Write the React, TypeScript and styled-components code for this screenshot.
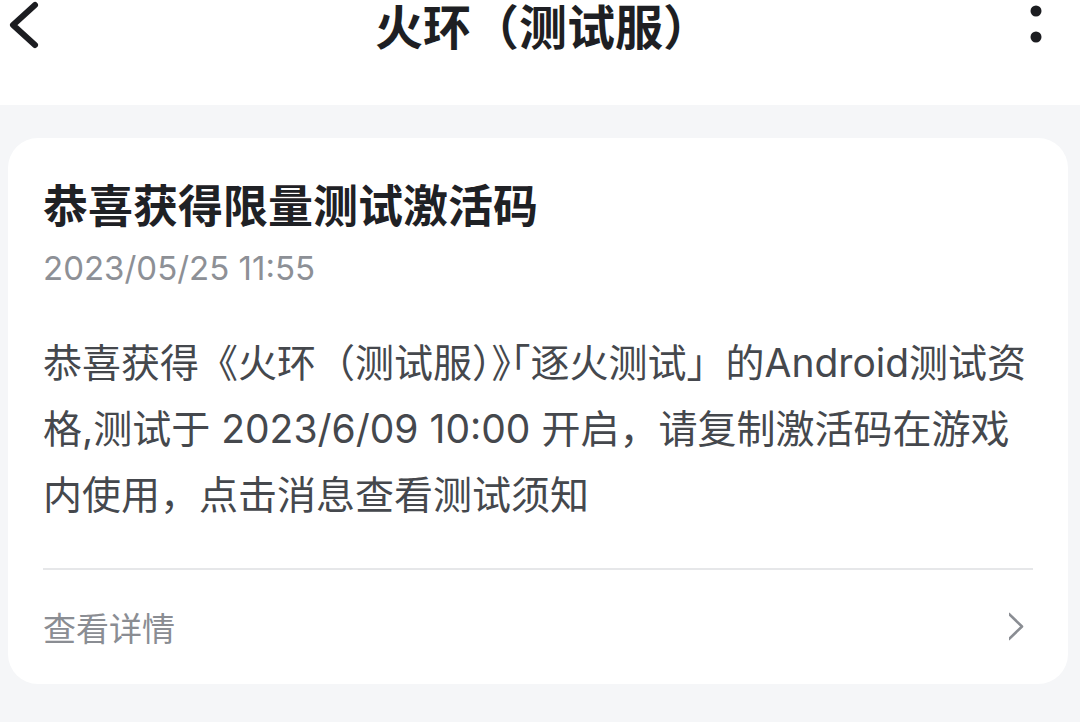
import React from "react";
import styled, { createGlobalStyle } from "styled-components";

const GlobalStyle = createGlobalStyle`
  html, body {
    margin: 0;
    padding: 0;
    background: #f5f6f8;
  }
  body {
    font-family: Inter, "Noto Sans CJK SC", sans-serif;
  }
`;

const Page = styled.div`
  width: 1080px;
  min-height: 722px;
  background: #f5f6f8;
  display: flex;
  flex-direction: column;
`;

const Header = styled.header`
  height: 105px;
  background: #ffffff;
  display: grid;
  grid-template-columns: 120px 1fr 120px;
  align-items: start;
  box-sizing: border-box;
`;

const IconButton = styled.button<{ $align: "start" | "end" }>`
  border: 0;
  background: transparent;
  padding: 0;
  height: 56px;
  display: flex;
  align-items: center;
  justify-content: ${(p) => (p.$align === "start" ? "flex-start" : "flex-end")};
  ${(p) => (p.$align === "start" ? "padding-left: 8px;" : "padding-right: 37px;")}
  cursor: pointer;
`;

const HeaderTitle = styled.h1`
  margin: 0;
  line-height: 48px;
  text-align: center;
  font-family: "Noto Sans CJK SC", sans-serif;
  font-size: 48px;
  font-weight: 700;
  color: #1e1f23;
  padding-left: 6px;
  white-space: nowrap;
`;

const Content = styled.main`
  padding: 33px 12px 38px 8px;
`;

const Card = styled.section`
  background: #ffffff;
  border-radius: 30px;
  padding: 0 35px;
`;

const CardTitle = styled.h2`
  margin: 0;
  padding-top: 36px;
  font-family: "Noto Sans CJK SC", sans-serif;
  font-size: 45px;
  line-height: 60px;
  font-weight: 700;
  color: #1f2125;
`;

const DateText = styled.div`
  margin-top: 12px;
  font-family: Inter, "Noto Sans CJK SC", sans-serif;
  font-size: 33px;
  line-height: 44px;
  color: #8d9096;
`;

const Body = styled.p`
  margin: 37px 0 0;
  font-family: Inter, "Noto Sans CJK SC", sans-serif;
  font-size: 39px;
  line-height: 66px;
  color: #45484d;
`;

const Punct = styled.span`
  font-family: "Noto Sans CJK SC", sans-serif;
  font-feature-settings: "halt" 1;
`;

const Divider = styled.hr`
  margin: 40px 0 0;
  border: 0;
  height: 2px;
  background: #e6e7e9;
`;

const FooterRow = styled.div`
  height: 114px;
  display: flex;
  align-items: center;
  justify-content: space-between;
`;

const FooterLabel = styled.span`
  font-family: "Noto Sans CJK SC", sans-serif;
  font-size: 33px;
  color: #8a8d93;
`;

const BackIcon = () => (
  <svg width="40" height="56" viewBox="0 0 40 56">
    <path
      d="M27 5 L5 25 L27 45"
      fill="none"
      stroke="#1c1d21"
      strokeWidth="6"
      strokeLinecap="round"
      strokeLinejoin="round"
    />
  </svg>
);

const MoreIcon = () => (
  <svg width="14" height="56" viewBox="0 0 14 56">
    <circle cx="7" cy="11" r="5.5" fill="#1c1d21" />
    <circle cx="7" cy="37" r="5.5" fill="#1c1d21" />
  </svg>
);

const ChevronRight = () => (
  <svg width="24" height="30" viewBox="0 0 24 30">
    <path
      d="M0 2 L13 14.5 L0 27"
      fill="none"
      stroke="#8a8d93"
      strokeWidth="2.6"
      strokeLinecap="round"
      strokeLinejoin="round"
    />
  </svg>
);

export default function App() {
  return (
    <>
      <GlobalStyle />
      <Page>
        <Header>
          <IconButton $align="start" aria-label="返回">
            <BackIcon />
          </IconButton>
          <HeaderTitle>火环（测试服）</HeaderTitle>
          <IconButton $align="end" aria-label="更多">
            <MoreIcon />
          </IconButton>
        </Header>
        <Content>
          <Card>
            <CardTitle>恭喜获得限量测试激活码</CardTitle>
            <DateText>2023/05/25 11:55</DateText>
            <Body>
              恭喜获得《火环（测试服）<Punct>》</Punct>「逐火测试」的Android测试资格,测试于 2023/6/09 10:00 开启，请复制激活码在游戏内使用，点击消息查看测试须知
            </Body>
            <Divider />
            <FooterRow>
              <FooterLabel>查看详情</FooterLabel>
              <ChevronRight />
            </FooterRow>
          </Card>
        </Content>
      </Page>
    </>
  );
}
